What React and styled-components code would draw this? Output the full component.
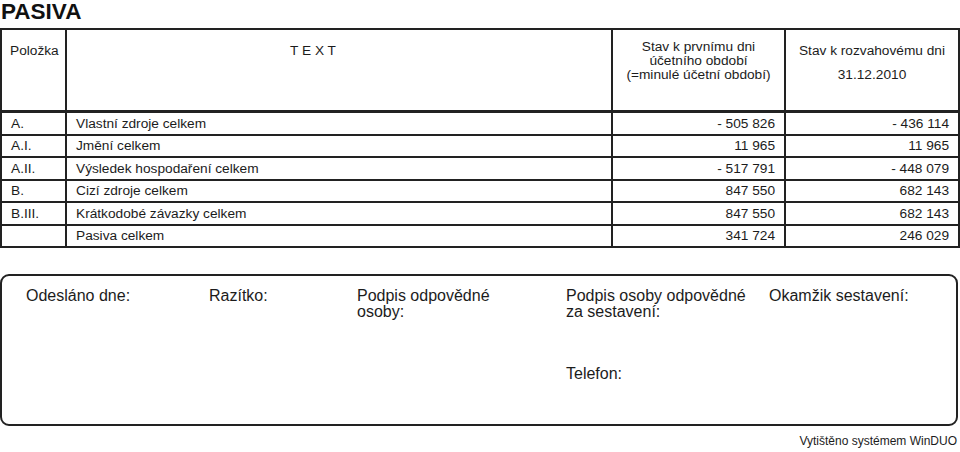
import React from 'react'
import styled, { createGlobalStyle } from 'styled-components'

const GlobalStyle = createGlobalStyle`
  html, body {
    margin: 0;
    padding: 0;
    background: #fff;
  }
  body {
    font-family: "Liberation Sans", Arial, sans-serif;
    color: #1c1c1c;
  }
`

const Page = styled.div`
  width: 960px;
  height: 452px;
  overflow: hidden;
  box-sizing: border-box;
  padding: 0 2px 0 0;
`

const Title = styled.h1`
  margin: 0;
  padding: 0 0 0 1px;
  height: 28px;
  font-size: 22.5px;
  line-height: 24px;
  font-weight: bold;
  color: #111;
`

const Table = styled.table`
  width: 958px;
  border-collapse: collapse;
  table-layout: fixed;
  font-size: 13.7px;
`

const HeadCell = styled.th`
  border: 2px solid #222;
  border-bottom-width: 3px;
  height: 66px;
  padding: ${p => p.$pad || '10px 0 0 0'};
  vertical-align: top;
  text-align: ${p => (p.$left ? 'left' : 'center')};
  font-size: 13.7px;
  font-weight: normal;
  line-height: 14px;
  white-space: nowrap;
`

const Cell = styled.td`
  border: 2px solid #222;
  height: 20.5px;
  padding: 0 ${p => (p.$num ? '9px' : '0')} 0 ${p => (p.$num ? '0' : '9px')};
  text-align: ${p => (p.$num ? 'right' : 'left')};
  line-height: 19px;
  white-space: nowrap;
`

const DateLine = styled.div`
  margin-top: 10px;
`

const FooterBox = styled.div`
  margin-top: 26px;
  width: 958px;
  height: 152px;
  box-sizing: border-box;
  border: 2.5px solid #222;
  border-radius: 9px;
  padding: 12px 0 0 24px;
  display: grid;
  grid-template-columns: 183px 148px 209px 203px 1fr;
  font-size: 16px;
  line-height: 16px;
  align-items: start;
`

const FieldCol = styled.div`
  display: flex;
  flex-direction: column;
`

const Field = styled.div`
  margin-top: ${p => p.$gap || '0'};
`

const Printed = styled.div`
  margin-top: 8px;
  text-align: right;
  font-size: 12px;
  padding-right: 1px;
`

const rows = [
  ['A.', 'Vlastní zdroje celkem', '- 505 826', '- 436 114'],
  ['A.I.', 'Jmění celkem', '11 965', '11 965'],
  ['A.II.', 'Výsledek hospodaření celkem', '- 517 791', '- 448 079'],
  ['B.', 'Cizí zdroje celkem', '847 550', '682 143'],
  ['B.III.', 'Krátkodobé závazky celkem', '847 550', '682 143'],
  ['', 'Pasiva celkem', '341 724', '246 029'],
]

export default function App() {
  return (
    <Page>
      <GlobalStyle />
      <Title>PASIVA</Title>
      <Table>
        <colgroup>
          <col style={{ width: 65 }} />
          <col style={{ width: 546 }} />
          <col style={{ width: 173 }} />
          <col style={{ width: 174 }} />
        </colgroup>
        <thead>
          <tr>
            <HeadCell $left $pad="14px 0 0 8px">Položka</HeadCell>
            <HeadCell $pad="14px 52px 0 0">T E X T</HeadCell>
            <HeadCell>
              Stav k prvnímu dni
              <br />
              účetního období
              <br />
              (=minulé účetní období)
            </HeadCell>
            <HeadCell $pad="14px 0 0 0">
              Stav k rozvahovému dni
              <DateLine>31.12.2010</DateLine>
            </HeadCell>
          </tr>
        </thead>
        <tbody>
          {rows.map(([code, text, prev, cur], i) => (
            <tr key={i}>
              <Cell>{code}</Cell>
              <Cell>{text}</Cell>
              <Cell $num>{prev}</Cell>
              <Cell $num>{cur}</Cell>
            </tr>
          ))}
        </tbody>
      </Table>
      <FooterBox>
        <Field>Odesláno dne:</Field>
        <Field>Razítko:</Field>
        <Field>
          Podpis odpovědné
          <br />
          osoby:
        </Field>
        <FieldCol>
          <Field>
            Podpis osoby odpovědné
            <br />
            za sestavení:
          </Field>
          <Field $gap="46px">Telefon:</Field>
        </FieldCol>
        <Field>Okamžik sestavení:</Field>
      </FooterBox>
      <Printed>Vytištěno systémem WinDUO</Printed>
    </Page>
  )
}
